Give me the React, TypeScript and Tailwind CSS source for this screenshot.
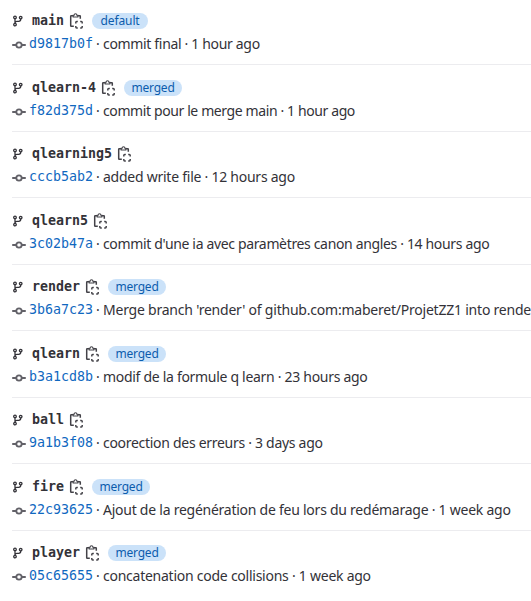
type Branch = { name: string; badge?: string; hash: string; message: string; tracking: string };

const branches: Branch[] = [
  { name: "main", badge: "default", hash: "d9817b0f", message: "commit final · 1 hour ago", tracking: "tracking-[-0.33px]" },
  { name: "qlearn-4", badge: "merged", hash: "f82d375d", message: "commit pour le merge main · 1 hour ago", tracking: "tracking-[-0.39px]" },
  { name: "qlearning5", hash: "cccb5ab2", message: "added write file · 12 hours ago", tracking: "tracking-[-0.25px]" },
  { name: "qlearn5", hash: "3c02b47a", message: "commit d'une ia avec paramètres canon angles · 14 hours ago", tracking: "tracking-[-0.345px]" },
  { name: "render", badge: "merged", hash: "3b6a7c23", message: "Merge branch 'render' of github.com:maberet/ProjetZZ1 into rende", tracking: "tracking-[-0.22px]" },
  { name: "qlearn", badge: "merged", hash: "b3a1cd8b", message: "modif de la formule q learn · 23 hours ago", tracking: "tracking-[-0.3px]" },
  { name: "ball", hash: "9a1b3f08", message: "coorection des erreurs · 3 days ago", tracking: "tracking-[-0.29px]" },
  { name: "fire", badge: "merged", hash: "22c93625", message: "Ajout de la regénération de feu lors du redémarage · 1 week ago", tracking: "tracking-[-0.25px]" },
  { name: "player", badge: "merged", hash: "05c65655", message: "concatenation code collisions · 1 week ago", tracking: "tracking-[-0.25px]" },
];

function BranchIcon() {
  return (
    <svg viewBox="0 0 12 12" className="h-3 w-3 shrink-0" fill="none" stroke="#333238" strokeWidth="1.3">
      <circle cx="3" cy="2.4" r="1.3" />
      <circle cx="3" cy="9.6" r="1.3" />
      <circle cx="8.7" cy="2.6" r="1.3" />
      <path d="M3 3.7v4.6M8.7 3.9v.4a2 2 0 0 1-2 2H5a2 2 0 0 0-2 2" />
    </svg>
  );
}

function CommitIcon() {
  return (
    <svg viewBox="0 0 14 14" className="mt-0.5 h-3.5 w-3.5 shrink-0" fill="none" stroke="#626168" strokeWidth="1.8">
      <circle cx="7" cy="7" r="2.7" />
      <path d="M.9 7h3.3M9.8 7h3.3" strokeLinecap="round" />
    </svg>
  );
}

function CopyIcon() {
  return (
    <svg viewBox="0 0 16 16" className="h-4 w-4 shrink-0 overflow-visible" fill="none" stroke="#434248" strokeWidth="1.5">
      <path d="M5 2.7H3.2a.5.5 0 0 0-.5.5v9.6a.5.5 0 0 0 .5.5h2.6M10 2.7h1.8a.5.5 0 0 1 .5.5v2.6" />
      <path d="M5.2 4V2.2h.9a1.4 1.4 0 0 1 2.8 0h.9V4z" strokeWidth="1.1" />
      <path d="M9.8 8.5H8.7a.9.9 0 0 0-.9.9v1.1M12.2 8.5h1.1a.9.9 0 0 1 .9.9v1.1M14.2 12.9V14a.9.9 0 0 1-.9.9h-1.1M9.8 14.9H8.7a.9.9 0 0 1-.9-.9v-1.1" />
    </svg>
  );
}

export default function App() {
  return (
    <main className="h-[601px] w-full overflow-hidden bg-white pl-3 font-['Noto_Sans',sans-serif] text-[#333238]">
      <ul>
        {branches.map((b) => (
          <li key={b.name} className="flex h-[66.5px] flex-col justify-end border-b border-[#ececef] pb-2 first:h-[65px] last:border-transparent">
            <div className="flex h-[22px] items-center">
              <BranchIcon />
              <span className="ml-2 font-['DejaVu_Sans_Mono',monospace] text-[13.3px] leading-[22px] font-bold">{b.name}</span>
              <span className="ml-1"><CopyIcon /></span>
              {b.badge && (
                <span className={`ml-2 flex h-4 items-center justify-center rounded-full bg-[#cbe2f9] text-xs leading-4 text-[#0b5cad] ${b.badge === "default" ? "w-14 tracking-[-0.1px]" : "w-[58px] tracking-[-0.2px]"}`}>
                  {b.badge}
                </span>
              )}
            </div>
            <div className="flex h-6 items-center whitespace-nowrap">
              <CommitIcon />
              <span className="ml-[3px] w-16 shrink-0 font-['DejaVu_Sans_Mono',monospace] text-[13.3px] leading-6 text-[#1068bf]">{b.hash}</span>
              <span className="w-[10px] shrink-0 text-center text-sm">·</span>
              <span className={`text-sm leading-6 ${b.tracking}`}>{b.message}</span>
            </div>
          </li>
        ))}
      </ul>
    </main>
  );
}
